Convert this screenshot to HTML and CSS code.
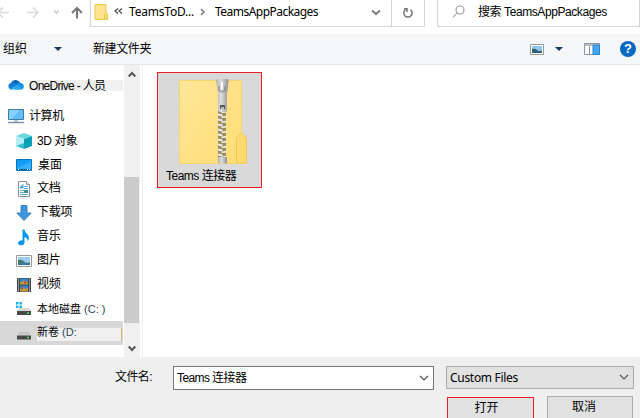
FILE: index.html
```html
<!DOCTYPE html>
<html lang="zh-CN">
<head>
<meta charset="utf-8">
<title>打开</title>
<link rel="stylesheet" href="styles.css">
</head>
<body>
<div class="dialog">
  <header class="nav">
    <svg class="arrows" width="90" height="27" viewBox="0 0 90 27" fill="none" stroke-width="1.6">
      <path d="M-2 12.5H9M3 7.5L-2 12.5L3 17.5M27 12.5H38M33 7.5L38 12.5L33 17.5" stroke="#dadada"/>
      <path d="M54 10.5L56.5 13L59 10.5" stroke="#c8c8c8"/>
      <path d="M77 18.5V8M72 13L77 8L82 13" stroke="#777" stroke-width="2"/>
    </svg>
    <div class="address">
      <svg class="folder" width="15" height="18" viewBox="0 0 15 18"><path d="M1 1.5H12V10L13.500 11V16.500H1Z" fill="#ffe48d" stroke="#e9c552"/><path d="M10.500 16V11L12 9.500L13.500 11V16Z" fill="#ffda70" stroke="#e9c552" stroke-width=".8"/></svg>
      <svg class="laquo" width="9" height="8" viewBox="0 0 9 8" fill="none" stroke="#444" stroke-width="1.200"><path d="M4 .5L1 3L4 5.500M8 .5L5 3L8 5.500"/></svg>
      <span class="crumb crumb-a">TeamsToD...</span>
      <svg class="sep" width="6" height="8" viewBox="0 0 6 8" fill="none" stroke="#777" stroke-width="1.500"><path d="M1 1L4 4L1 7"/></svg>
      <span class="crumb crumb-b">TeamsAppPackages</span>
      <svg class="drop" width="10" height="7" viewBox="0 0 10 7" fill="none" stroke="#777" stroke-width="1.800"><path d="M1 1.500L5 5L9 1.500"/></svg>
      <div class="refresh"><svg width="12" height="12" viewBox="0 0 12 12" fill="none" stroke="#777" stroke-width="1.500"><path d="M3.500 2.500A4.200 4.200 0 1 0 8.500 2.600M2 1.800H5V5"/></svg></div>
    </div>
    <div class="search">
      <svg width="14" height="14" viewBox="0 0 14 14" fill="none" stroke="#999" stroke-width="1.100"><circle cx="8" cy="5" r="4"/><path d="M5 8L1 12.500"/></svg>
      <span class="search-text"><span class="cjk">搜索</span> TeamsAppPackages</span>
    </div>
  </header>

  <div class="toolbar">
    <span class="organize">组织</span>
    <i class="tri"></i>
    <span class="newfolder">新建文件夹</span>
    <div class="tools">
      <svg width="14" height="11" viewBox="0 0 14 11"><path d="M.5.5H13.500V10.500H.5Z" fill="#fff" stroke="#999"/><path d="M2 2H12V9H2Z" fill="#8fc5ee"/><path d="M2 5Q5 4 7 6T12 6.500V9H2Z" fill="#35665d"/><path d="M2 8Q7 6.500 12 8V9H2Z" fill="#245c91"/></svg>
      <i class="tri"></i>
      <svg class="pane" width="16" height="12" viewBox="0 0 16 12"><path d="M.5.500H15.500V11.500H.5Z" fill="#fff" stroke="#8d949c"/><path d="M1 1H15V3H1Z" fill="#b9bec4"/><path d="M5.500 3V11" stroke="#8d949c"/><path d="M9 2H15.500V11.500H9Z" fill="#45a6f1" stroke="#2585d4"/></svg>
      <div class="help">?</div>
    </div>
  </div>

  <main class="main">
    <nav class="tree">
      <div class="row row-cloud">
        <svg width="16" height="11" viewBox="0 0 16 11"><path d="M3 4A5 5 0 0 1 12 3.500L10 8L3 6Z" fill="#0a62b5"/><path d="M3 4Q7 3 10 6L4 10.500A3.300 3.300 0 0 1 3 4Z" fill="#127dd7"/><path d="M9 5Q11 3 13.500 4Q16 5 15.900 7.500Q15.500 10.500 13 10.500H7Z" fill="#1693e5"/><path d="M2 9.500L9.500 6L14.500 10Q14 10.500 13 10.500H4Q2.800 10.500 2 9.500Z" fill="#29a9ee"/></svg>
        <span class="label label-cloud">OneDrive - <span class="cjk">人员</span></span>
      </div>
      <div class="row row-pc">
        <svg width="16" height="15" viewBox="0 0 16 15"><path d="M.5.500H15.500V10.500H.5Z" fill="#62bdf7" stroke="#427b9d"/><path d="M1 1H12L4 10H1Z" fill="#85d0fd"/><path d="M6 11H10V13H6Z" fill="#c5ced5"/><path d="M0 13.500H16" stroke="#7c8fa5" stroke-width="1.400"/></svg>
        <span class="label label-pc">计算机</span>
      </div>
      <div class="row">
        <svg width="16" height="16" viewBox="0 0 16 16"><path d="M8 0L16 3L8 6L0 3Z" fill="#68d8e2"/><path d="M0 3L8 6V16L0 13Z" fill="#b5edf2"/><path d="M8 6L16 3V13L8 16Z" fill="#0ba0b5"/><path d="M0 13L8 10V16Z" fill="#38bdca"/></svg>
        <span class="label label-3d">3D <span class="cjk">对象</span></span>
      </div>
      <div class="row">
        <svg width="16" height="12" viewBox="0 0 16 12"><path d="M.5.500H15.500V11.500H.5Z" fill="#149df4" stroke="#0876be"/><path d="M1 9L15 3V10H1Z" fill="#35b0fb"/><path d="M1 10.500H15" stroke="#075f99"/><path d="M2 10.500H4M11 10.500H14" stroke="#fff" stroke-dasharray="1 1"/></svg>
        <span class="label label-desk">桌面</span>
      </div>
      <div class="row">
        <svg width="16" height="16" viewBox="0 0 16 16"><path d="M2.500.5H10.500L13.500 3.500V15.500H2.500Z" fill="#fff" stroke="#8b9297"/><path d="M10.500.5V3.500H13.500" fill="#eee" stroke="#8b9297"/><path d="M4 6.500L7 3.500V7H4ZM8 5.500H12M8 7.500H12M4 9.500H8M4 11.500H8M4 13.500H12" fill="#1e9de0" stroke="#57aee0"/><path d="M8 9H12V12H8Z" fill="#3f8b8d"/></svg>
        <span class="label label-up">文档</span>
      </div>
      <div class="row">
        <svg width="16" height="16" viewBox="0 0 16 16"><path d="M5 .5H11V8H15.300L8 15.500L.7 8H5Z" fill="#3e95de" stroke="#2978bd" stroke-width=".8"/></svg>
        <span class="label label-up">下载项</span>
      </div>
      <div class="row">
        <svg width="16" height="17" viewBox="0 0 16 17"><path d="M6.500.5H8.500Q8.500 3 11.500 5.500Q14.500 8.500 11.500 12.500Q12 9 8.500 8V13.500Q8.500 16.200 5 16.200Q2 16.200 2 13.800Q2.500 11.200 6.500 11.200Z" fill="#0997ec"/></svg>
        <span class="label label-up">音乐</span>
      </div>
      <div class="row">
        <svg width="16" height="12" viewBox="0 0 16 12"><path d="M.5.500H15.500V11.500H.5Z" fill="#fff" stroke="#999"/><path d="M2 2H14V10H2Z" fill="#9bcef3"/><path d="M2 5Q6 4 8 6.500T14 7V10H2Z" fill="#47776c"/><path d="M2 9Q8 7 14 8.500V10H2Z" fill="#3c77a2"/></svg>
        <span class="label label-up">图片</span>
      </div>
      <div class="row">
        <svg width="16" height="16" viewBox="0 0 16 16"><path d="M1 1H15V15H1Z" fill="#30353a"/><path d="M4 1.500H12V7.500H4ZM4 8.500H12V14.500H4Z" fill="#3387d4"/><path d="M4 5H6L8 3L10 5H12V7.500H4ZM4 12L7 10L9 12L12 11V14.500H4Z" fill="#c99730"/><path d="M8 4.500H10V6.500H8ZM5 10H7V12H5Z" fill="#b54833"/><path d="M2.500 1.500V15M13.500 1.500V15" stroke="#e5e8ea" stroke-width="1.400" stroke-dasharray="1 1"/></svg>
        <span class="label label-up">视频</span>
      </div>
      <div class="row">
        <svg width="16" height="14" viewBox="0 0 16 14"><path d="M0 0H2.500V2.500H0ZM3.500 0H6V2.500H3.500ZM0 3.500H2.500V6H0ZM3.500 3.500H6V6H3.500Z" fill="#18b1f2"/><path d="M3 6H13L15 9H1Z" fill="#d7d9da"/><path d="M1 9H15V13H1Z" fill="#46494b"/><path d="M11 11H13" stroke="#45e263" stroke-width="1.500"/></svg>
        <span class="label label-drive">本地磁盘 <span class="latin">(C: )</span></span>
      </div>
      <div class="row row-selected">
        <svg width="16" height="14" viewBox="0 0 16 14"><path d="M3 6H13L15 9.500H1Z" fill="#c3c5c7"/><path d="M1 9.500H15V13.500H1Z" fill="#46494b"/><path d="M11 11.500H13" stroke="#45e263" stroke-width="1.500"/></svg>
        <span class="label label-drive label-vol">新卷 <span class="latin">(D:</span></span>
      </div>
    </nav>
    <div class="scroll">
      <svg width="8" height="7" viewBox="0 0 8 7" fill="none" stroke="#555" stroke-width="2"><path d="M.7 5.500L4 2L7.300 5.500"/></svg>
      <div class="thumb"></div>
      <svg width="8" height="7" viewBox="0 0 8 7" fill="none" stroke="#555" stroke-width="2"><path d="M.7 1.500L4 5L7.300 1.500"/></svg>
    </div>
    <section class="files">
      <div class="tile">
        <svg class="zip" width="70" height="86" viewBox="0 0 70 86">
          <defs>
            <linearGradient id="paper" x2="1" y2="1"><stop stop-color="#ffe799"/><stop offset="1" stop-color="#ffdc73"/></linearGradient>
            <linearGradient id="metal"><stop stop-color="#b0b0b0"/><stop offset=".4" stop-color="#dedede"/><stop offset="1" stop-color="#909090"/></linearGradient>
            <pattern id="teeth" width="8" height="5" patternUnits="userSpaceOnUse" x="40"><path d="M0 0H8V5H0Z" fill="#9b8d61"/><path d="M0 .5L4.500 1.500V3.500L0 2.500ZM8 2.700L3.500 3.700V5L8 4.700Z" fill="#eee"/></pattern>
          </defs>
          <path d="M1.500 2.500H63.500V56L68.500 60V85.500H1.500Z" fill="url(#paper)" stroke="#f5d372"/>
          <path d="M58.500 85V60L63.500 54.500L68.500 60V85Z" fill="#ffda70" stroke="#f0c95c"/>
          <path d="M40 33H48V80H40Z" fill="url(#teeth)"/>
          <path d="M38 3Q38 1 40 1H49Q51 1 50.500 3L49.500 14H49V32Q49 34 47 34H42Q40 34 40 32V14Z" fill="url(#metal)"/>
          <path d="M41 8V12Q44 16 47 12V8" fill="none" stroke="#858585" stroke-width="1.200"/>
          <path d="M44 4V11" stroke="#fff" stroke-width="2"/>
          <path d="M42 27H47V31H42Z" fill="#555"/><path d="M43 29H46V31H43Z" fill="#bbb"/>
          <path d="M40 79H49V85.500H40Z" fill="url(#metal)"/>
        </svg>
        <span class="tile-name">Teams <span class="cjk">连接器</span></span>
      </div>
    </section>
  </main>

  <footer class="footer">
    <div class="name-label">文件名:</div>
    <div class="name-input"><span>Teams <span class="cjk">连接器</span></span>
      <svg width="10" height="7" viewBox="0 0 10 7" fill="none" stroke="#555" stroke-width="1.200"><path d="M1 1L5 5L9 1"/></svg>
    </div>
    <div class="right">
      <div class="filter"><span>Custom Files</span>
        <svg width="10" height="7" viewBox="0 0 10 7" fill="none" stroke="#555" stroke-width="1.200"><path d="M1 1L5 5L9 1"/></svg>
      </div>
      <div class="buttons">
        <div class="btn btn-open">打开</div>
        <div class="btn btn-cancel">取消</div>
      </div>
    </div>
  </footer>
</div>
</body>
</html>
```
FILE: styles.css
```css
* { box-sizing: border-box; }
body { margin: 0; background: #fff; }
svg { display: block; flex: none; }
.dialog {
  width: 640px; height: 418px; overflow: hidden;
  display: flex; flex-direction: column;
  font: 12px/16px "Liberation Sans", "Noto Sans CJK SC", sans-serif;
  color: #000; white-space: nowrap;
}
.cjk { font-family: "Noto Sans CJK SC", sans-serif; }

.nav { height: 34px; display: flex; align-items: flex-start; flex: none; }
.address {
  width: 335px; height: 27px; display: flex; align-items: center;
  border: 1px solid #d4d4d4; border-top: 0; padding: 0 0 3px 3px;
}
.laquo { margin: 0 0 0 5px; }
.crumb { font-family: "Noto Sans", sans-serif; }
.crumb-a { width: 66px; margin-left: 6px; letter-spacing: -.2px; }
.sep { margin: 1px 0 0 5px; }
.crumb-b { width: 105px; margin-left: 9px; letter-spacing: -.53px; }
.drop { margin: 1px 0 0 51px; }
.refresh {
  margin: 0 0 -3px auto; width: 33px; height: 26px; padding: 0 0 1px 0;
  border-left: 1px solid #d4d4d4; display: flex; align-items: center; justify-content: center;
}
.search {
  width: 203px; height: 27px; margin-left: 12px; padding: 0 0 3px 14px;
  border: 1px solid #d4d4d4; border-top: 0; display: flex; align-items: center;
}
.search-text { margin-left: 12px; letter-spacing: -.42px; }

.toolbar {
  height: 31px; flex: none; background: #f4f6f8; border-bottom: 1px solid #e4e6e9;
  display: flex; align-items: center; padding-left: 3px;
}
.tri { width: 8px; height: 4px; background: #173a63; clip-path: polygon(0 0, 100% 0, 50% 100%); }
.organize { width: 51px; }
.newfolder { margin-left: 31px; letter-spacing: -.4px; }
.tools { margin-left: auto; display: flex; align-items: center; padding-right: 4px; }
.tools .tri { margin-left: 11px; }
.pane { margin-left: 21px; }
.help {
  width: 16px; height: 16px; margin-left: 20px; border-radius: 50%; background: #0768c4;
  color: #fff; font: bold 13px/16px "Liberation Sans", sans-serif; text-align: center;
}

.main { height: 292px; flex: none; display: flex; }
.tree { width: 124px; }
.row { height: 24px; padding-left: 16px; display: flex; align-items: center; }
.label { margin-left: 5px; }
.row-cloud { height: 38px; padding-left: 8px; }
.label-cloud { width: 94px; height: 11px; line-height: 9px; background: #f0f0f0; letter-spacing: -.7px; margin-top: 2px; }
.row-pc { height: 26px; padding-left: 8px; }
.label-pc { letter-spacing: -.4px; }
.label-3d { letter-spacing: -.5px; padding-bottom: 1px; }
.label-desk { margin-left: 6px; }
.label-up { padding-bottom: 2px; letter-spacing: -.2px; }
.label-drive { font-size: 11px; }
.latin { font-family: "Liberation Sans", sans-serif; color: #345; }
.row-selected { width: 123px; background: #d8d8d8; }
.label-vol { width: 85px; height: 13px; line-height: 9px; margin-top: 2px; background: #f0f0f0; border-right: 1px solid #d8b36a; }
.scroll {
  width: 16px; background: #f0f0f0; display: flex; flex-direction: column;
  align-items: center; padding: 6px 0 5px;
}
.thumb { width: 15px; height: 146px; margin: 99px 1px auto 0; background: #cbcbcb; }
.files { flex: 1; margin-left: 2px; border-left: 1px solid #eee; padding: 7px 0 0 14px; }
.tile {
  width: 105px; height: 116px; background: #d9d9d9; border: 1px solid #ed1c24;
  display: flex; flex-direction: column; padding: 5px 0 0 8px;
}
.zip { margin-left: 12px; }
.tile-name { margin-top: 3px; letter-spacing: -.5px; }

.footer { flex: 1; background: #efefef; display: flex; align-items: flex-start; padding-left: 115px; }
.name-label { width: 58px; margin-top: 12px; letter-spacing: -.6px; }
.name-input {
  width: 261px; height: 24px; margin-top: 9px; padding: 0 4px 2px 3px;
  background: #fff; border: 1px solid #777; letter-spacing: -.6px;
  display: flex; align-items: center; justify-content: space-between;
}
.name-input svg { margin-top: 3px; }
.right { margin-left: 12px; padding-top: 9px; }
.filter {
  width: 188px; height: 23px; padding: 0 4px 0 3px; background: #e1e1e1; border: 1px solid #adadad;
  display: flex; align-items: center; justify-content: space-between;
  font-family: "Noto Sans", sans-serif; letter-spacing: -.3px;
}
.buttons { display: flex; gap: 13px; margin-top: 7px; padding-left: 1px; }
.btn { width: 87px; height: 30px; text-align: center; line-height: 21px; background: #e1e1e1; border: 1px solid #adadad; }
.btn-open { margin-top: 1px; border-color: #ed1c24; padding-right: 8px; }
.btn-cancel { width: 86px; padding-right: 12px; }
```
